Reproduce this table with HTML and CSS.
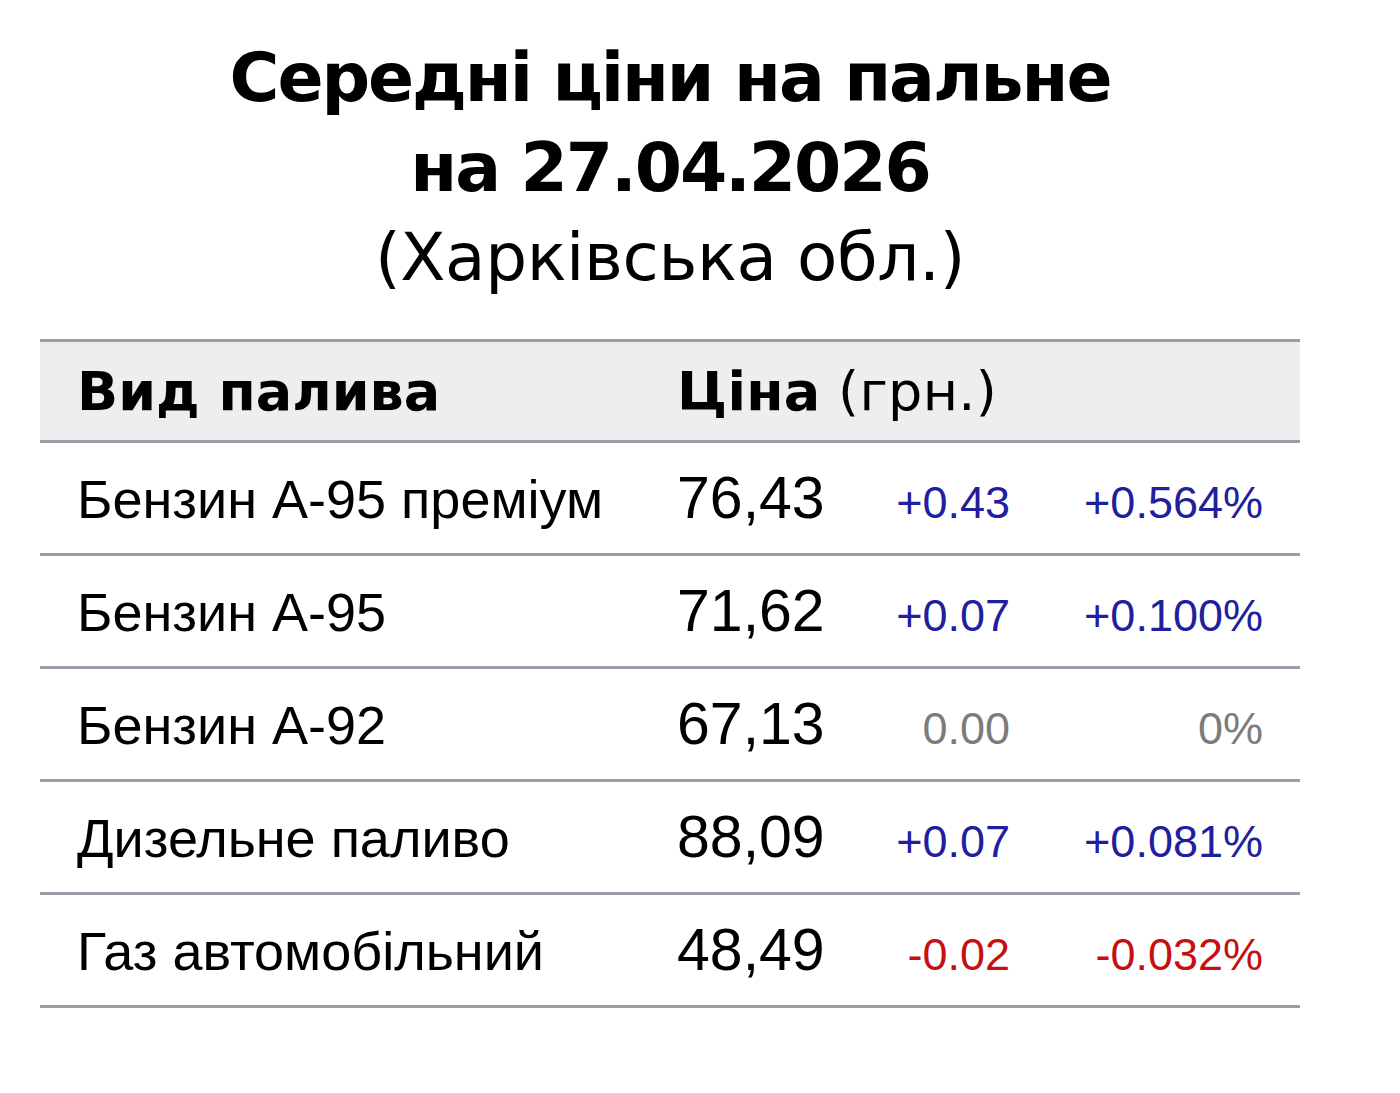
FILE: index.html
```html
<!DOCTYPE html>
<html lang="uk">
<head>
<meta charset="utf-8">
<title>Середні ціни на пальне</title>
<link rel="stylesheet" href="styles.css">
</head>
<body>
<main class="page">
  <h1 class="title">
    <span class="title-main">Середні ціни на пальне<br>на 27.04.2026</span>
    <span class="title-region">(Харківська обл.)</span>
  </h1>
  <div class="prices">
    <div class="row head">
      <div class="c-name">Вид палива</div>
      <div class="c-head-price"><b>Ціна</b> (грн.)</div>
    </div>
    <div class="row">
      <div class="c-name">Бензин А-95 преміум</div>
      <div class="c-price">76,43</div>
      <div class="c-delta up">+0.43</div>
      <div class="c-pct up">+0.564%</div>
    </div>
    <div class="row">
      <div class="c-name">Бензин А-95</div>
      <div class="c-price">71,62</div>
      <div class="c-delta up">+0.07</div>
      <div class="c-pct up">+0.100%</div>
    </div>
    <div class="row">
      <div class="c-name">Бензин А-92</div>
      <div class="c-price">67,13</div>
      <div class="c-delta zero">0.00</div>
      <div class="c-pct zero">0%</div>
    </div>
    <div class="row">
      <div class="c-name">Дизельне паливо</div>
      <div class="c-price">88,09</div>
      <div class="c-delta up">+0.07</div>
      <div class="c-pct up">+0.081%</div>
    </div>
    <div class="row">
      <div class="c-name">Газ автомобільний</div>
      <div class="c-price">48,49</div>
      <div class="c-delta down">-0.02</div>
      <div class="c-pct down">-0.032%</div>
    </div>
  </div>
</main>
</body>
</html>
```
FILE: styles.css
```css
html, body {
  margin: 0;
  padding: 0;
  background: #fff;
  color: #000;
}

.page {
  width: 1260px;
  margin-left: 40px;
  padding-top: 33px;
}

.title {
  margin: 0;
  text-align: center;
  font-family: "DejaVu Sans", Verdana, sans-serif;
  font-size: 68px;
  line-height: 90px;
  font-weight: normal;
}

.title-main {
  display: block;
  font-weight: bold;
  letter-spacing: -2.1px;
}

.title-region {
  display: block;
  font-size: 66px;
  letter-spacing: -0.4px;
}

.prices {
  margin-top: 36px;
  border-top: 3px solid #9c9cab;
}

.row {
  display: grid;
  grid-template-columns: 600px 153px 180px 253px;
  align-items: baseline;
  padding: 21px 37px 0;
  height: 113px;
  box-sizing: border-box;
  border-bottom: 3px solid #9c9cab;
  font-family: "Liberation Sans", Arial, sans-serif;
}

.row.head {
  height: 101px;
  background: #eeeeee;
  font-family: "DejaVu Sans", Verdana, sans-serif;
  padding-top: 18px;
}

.row.head .c-name {
  font-weight: bold;
}

.c-head-price {
  grid-column: 2 / 5;
  letter-spacing: 0.3px;
}

.c-name {
  font-size: 54px;
}

.row.head .c-name,
.row.head .c-head-price {
  font-size: 54px;
}

.c-price {
  font-size: 59px;
}

.c-delta,
.c-pct {
  font-size: 45px;
  text-align: right;
}

.up { color: #20209e; }
.down { color: #c80f0f; }
.zero { color: #7c7c7c; }
```
